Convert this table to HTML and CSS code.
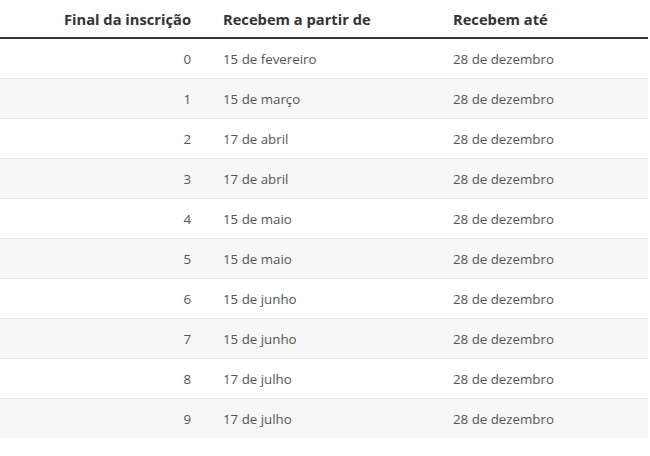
FILE: index.html
```html
<!DOCTYPE html>
<html lang="pt-BR">
<head>
<meta charset="utf-8">
<link rel="stylesheet" href="styles.css">
</head>
<body>
<table class="tbl">
  <thead>
    <tr><th class="c1">Final da inscrição</th><th class="c2">Recebem a partir de</th><th class="c3">Recebem até</th></tr>
  </thead>
  <tbody>
    <tr><td class="c1">0</td><td>15 de fevereiro</td><td>28 de dezembro</td></tr>
    <tr><td class="c1">1</td><td>15 de março</td><td>28 de dezembro</td></tr>
    <tr><td class="c1">2</td><td>17 de abril</td><td>28 de dezembro</td></tr>
    <tr><td class="c1">3</td><td>17 de abril</td><td>28 de dezembro</td></tr>
    <tr><td class="c1">4</td><td>15 de maio</td><td>28 de dezembro</td></tr>
    <tr><td class="c1">5</td><td>15 de maio</td><td>28 de dezembro</td></tr>
    <tr><td class="c1">6</td><td>15 de junho</td><td>28 de dezembro</td></tr>
    <tr><td class="c1">7</td><td>15 de junho</td><td>28 de dezembro</td></tr>
    <tr><td class="c1">8</td><td>17 de julho</td><td>28 de dezembro</td></tr>
    <tr><td class="c1">9</td><td>17 de julho</td><td>28 de dezembro</td></tr>
  </tbody>
</table>
</body>
</html>
```
FILE: styles.css
```css
html, body {
  margin: 0;
  padding: 0;
  background: #fff;
}
body {
  font-family: "Open Sans", "DejaVu Sans", sans-serif;
}
.tbl {
  width: 648px;
  border-collapse: collapse;
  table-layout: fixed;
}
.tbl th {
  height: 38px;
  padding: 0 16px;
  font-size: 14.7px;
  font-weight: 700;
  color: #333;
  text-align: left;
  vertical-align: middle;
  border-bottom: 2px solid #333;
  box-sizing: border-box;
}
.tbl th.c1 { width: 207px; text-align: right; }
.tbl th.c2 { width: 230px; }
.tbl td {
  height: 39px;
  padding: 0 16px;
  font-size: 13.3px;
  color: #555;
  vertical-align: middle;
  border-bottom: 1px solid #e8e8e8;
}
.tbl td.c1 { text-align: right; }
.tbl tbody tr:nth-child(even) td { background: #f7f7f7; }
.tbl tbody tr:last-child td { border-bottom: 0; }
```
